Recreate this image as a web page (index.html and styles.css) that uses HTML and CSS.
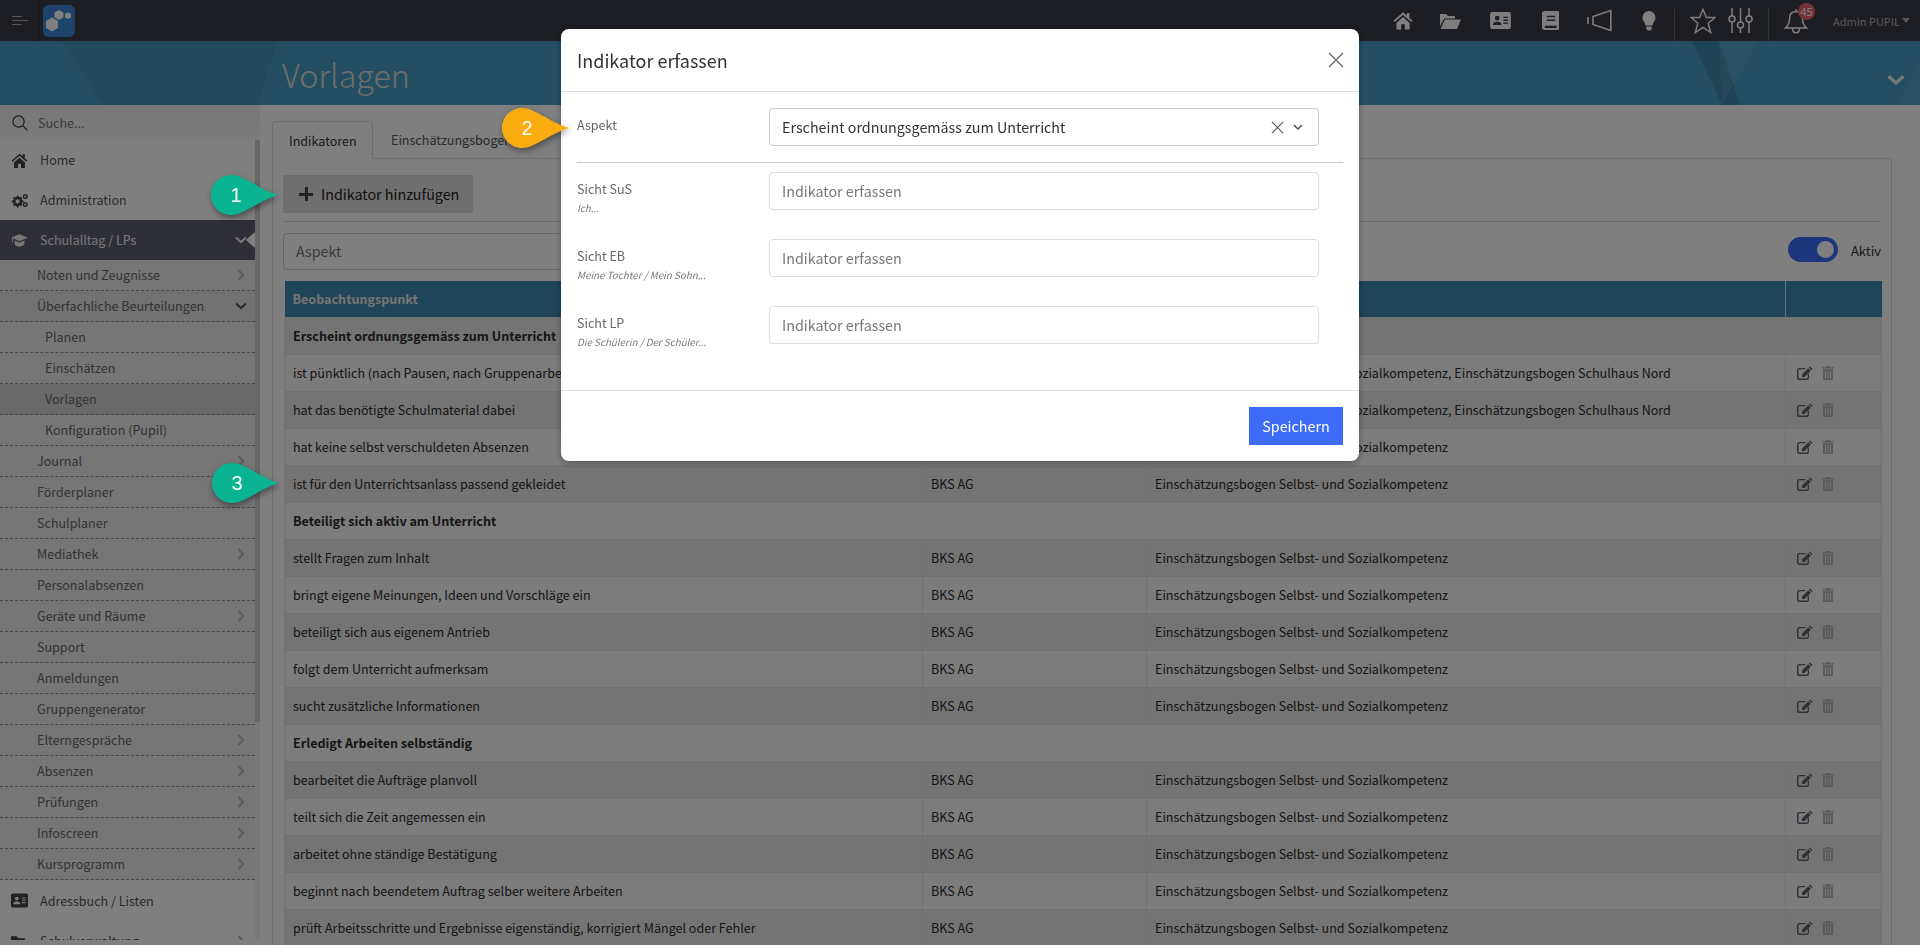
FILE: index.html
```html
<!DOCTYPE html>
<html lang="de">
<head>
  <meta charset="UTF-8">
  <title>Vorlagen</title>
  <link rel="stylesheet" href="styles.css">
</head>
<body>

  <!-- Icons -->
  <svg class="sprite" aria-hidden="true">
    <symbol id="i-home" viewBox="0 0 20 18"><path d="M10 .8.4 9.2l1.3 1.4L10 3.4l8.3 7.2 1.3-1.4-3.2-2.8V1.600h-2.600v2.400zM3.400 11.400 10 5.600l6.600 5.800V18h-4.800v-5.200H8.200V18H3.400z"/></symbol>
    <symbol id="i-folder" viewBox="0 0 22 18"><path d="M1 2h6l2 2h7v2.400H5.200L1 14zM5.800 7.600H22L18 17H1.600z"/></symbol>
    <symbol id="i-card" viewBox="0 0 22 18"><path fill-rule="evenodd" d="M2 0h18a2 2 0 0 1 2 2v14a2 2 0 0 1-2 2H2a2 2 0 0 1-2-2V2a2 2 0 0 1 2-2zm5.500 4a2.500 2.500 0 1 0 0 5 2.500 2.500 0 0 0 0-5zM3 13.800h9c0-2.400-1.500-3.600-4.500-3.600S3 11.400 3 13.800zM14 5v1.400h5V5zm0 3v1.400h5V8zm0 3v1.400h5V11z"/></symbol>
    <symbol id="i-book" viewBox="0 0 18 20"><path fill-rule="evenodd" d="M3 0h14a1 1 0 0 1 1 1v18a1 1 0 0 1-1 1H3a3 3 0 0 1-3-3V3a3 3 0 0 1 3-3zm2 5v1.500h9V5zm0 4v1.500h9V9zM3 15.500V18h12.500v-2.500z"/></symbol>
    <symbol id="i-horn" viewBox="0 0 25 23"><path fill="none" stroke="currentColor" stroke-width="1.600" d="M6 7.500 23.800 1.500v20L6 15.500zM1 8v7"/></symbol>
    <symbol id="i-bulb" viewBox="0 0 14 20"><path d="M7 0a6.500 6.500 0 0 0-6.500 6.500c0 3.200 2.500 4.700 3 8h7c.5-3.300 3-4.800 3-8A6.500 6.500 0 0 0 7 0z"/><path d="M4.200 15.500h5.600v2.600l-1.300 1.400h-3l-1.300-1.400z"/></symbol>
    <symbol id="i-star" viewBox="0 0 26 26"><path fill="none" stroke="currentColor" stroke-width="1.400" d="m13 1.500 3.400 8h8.600l-6.800 5.700 2.500 9.300-7.700-5.200-7.700 5.200 2.500-9.300L1 9.500h8.600z"/></symbol>
    <symbol id="i-sliders" viewBox="0 0 25 27"><g fill="none" stroke="currentColor" stroke-width="1.500"><path d="M4 1v8M4 15v11M12.500 1v14M12.500 21v5M21 1v8M21 15v11"/><circle cx="4" cy="12" r="3"/><circle cx="12.500" cy="18" r="3"/><circle cx="21" cy="12" r="3"/></g></symbol>
    <symbol id="i-bell" viewBox="0 0 24 26"><path fill="none" stroke="currentColor" stroke-width="1.500" d="M12 3.500c-4.500 0-6.500 3.400-6.500 7.500 0 5-1.800 7-4 9h21c-2.200-2-4-4-4-9 0-4.100-2-7.500-6.500-7.500zM12 1v2.500M8.500 20c0 3 1.500 4.800 3.500 4.800s3.500-1.800 3.500-4.800"/></symbol>
    <symbol id="i-search" viewBox="0 0 17 17"><path fill="none" stroke="currentColor" stroke-width="1.300" d="M7 1a6 6 0 1 0 0 12A6 6 0 0 0 7 1zm4.300 10.300 5 5"/></symbol>
    <symbol id="i-cogs" viewBox="0 0 17 14"><path d="M6 2.200 7.400 2l.5 1.500 1 .5 1.400-.7 1 1-.7 1.400.5 1 1.500.5v1.500l-1.500.5-.5 1 .7 1.400-1 1-1.400-.7-1 .5-.5 1.500H5.900l-.5-1.500-1-.5-1.400.7-1-1 .7-1.400-.5-1L.7 8.700V7.200l1.500-.5.5-1L2 4.300l1-1 1.400.7 1-.5zM6.600 5.800a2.100 2.100 0 1 0 0 4.200 2.100 2.100 0 0 0 0-4.200z"/><circle cx="14.300" cy="3" r="1.800" fill="none" stroke="currentColor" stroke-width="1.400"/><circle cx="14.300" cy="11" r="1.800" fill="none" stroke="currentColor" stroke-width="1.400"/></symbol>
    <symbol id="i-cap" viewBox="0 0 18 13"><path d="M9 0 18 3.500 9 7 2 4.300v4.200L1 8.500V3.900L0 3.500zM3.800 6.400 9 8.500l5.200-2.100V10c0 1.600-2.500 3-5.200 3s-5.200-1.400-5.200-3z"/></symbol>
    <symbol id="i-open" viewBox="0 0 16 12"><path d="M0 1h5l2 2h6v2H3.500L0 10zM4 6h12l-3 6H0z"/></symbol>
    <symbol id="i-right" viewBox="0 0 8 12"><path fill="none" stroke="currentColor" stroke-width="2.200" d="m1.500 1 4.500 5-4.500 5"/></symbol>
    <symbol id="i-down" viewBox="0 0 12 8"><path fill="none" stroke="currentColor" stroke-width="2.200" d="m1 1.500 5 4.500 5-4.500"/></symbol>
    <symbol id="i-edit" viewBox="0 0 16 14"><path d="M2.500 2H9L7.700 3.300H2.500a1 1 0 0 0-1 1v7.200a1 1 0 0 0 1 1h7.200a1 1 0 0 0 1-1V8.300L12 7v4.500A2.500 2.500 0 0 1 9.500 14h-7A2.500 2.500 0 0 1 0 11.500v-7A2.500 2.500 0 0 1 2.500 2zM13 .4l2.600 2.500-1.100 1.100L12 1.500zM11.300 2.200l2.500 2.500-6.300 6.200H5V8.400z"/></symbol>
    <symbol id="i-trash" viewBox="0 0 12 14"><path d="M4 0h4l.6 1.200H12v1.200H0V1.200h3.400zM1 3.300h10V13a1 1 0 0 1-1 1H2a1 1 0 0 1-1-1zm2 1.500v7.700h1V4.800zm2.500 0v7.700h1V4.800zm2.500 0v7.700h1V4.800z"/></symbol>
    <symbol id="i-drop" viewBox="0 0 68 40"><path d="M20 0C33 0 47 14 67 20 47 26 33 40 20 40 9 40 0 31 0 20S9 0 20 0z"/></symbol>
  </svg>

  <!-- Kopfzeile -->
  <header class="topbar">
    <div class="menu-btn"><span class="short"></span><span></span><span class="short"></span></div>
    <svg class="logo" viewBox="0 0 32 32">
      <rect width="32" height="32" rx="6" fill="#3d88d6"/>
      <path fill="#fff" d="m9 12.600 6 3.400v7l-6 3.400-6-3.400v-7zM16 5l4.500 2.500v5L16 15l-4.500-2.500v-5zM25 7.300l3 1.700v3.400l-3 1.700-3-1.700V9z"/>
    </svg>
    <nav class="top-icons">
      <svg class="ti ti-home"><use href="#i-home"/></svg>
      <svg class="ti ti-folder"><use href="#i-folder"/></svg>
      <svg class="ti ti-card"><use href="#i-card"/></svg>
      <svg class="ti ti-book"><use href="#i-book"/></svg>
      <svg class="ti ti-horn"><use href="#i-horn"/></svg>
      <svg class="ti ti-bulb"><use href="#i-bulb"/></svg>
      <span class="top-sep"></span>
      <svg class="ti ti-star"><use href="#i-star"/></svg>
      <svg class="ti ti-sliders"><use href="#i-sliders"/></svg>
      <span class="top-sep sep-2"></span>
      <div class="bell">
        <svg class="ti ti-bell"><use href="#i-bell"/></svg>
        <span class="badge">45</span>
      </div>
      <div class="user">Admin PUPIL<span class="caret"></span></div>
    </nav>
  </header>

  <!-- Titelband -->
  <div class="banner">
    <svg class="banner-bg" viewBox="0 0 1920 64" preserveAspectRatio="none">
      <path fill="#000" fill-opacity=".05" d="M62 0H278L257 64H103z"/>
      <path fill="#000" fill-opacity=".12" d="M1692 0H1719L1740 64H1722z"/>
      <path fill="#fff" fill-opacity=".07" d="M1719 0H1759L1722 64z"/>
      <path fill="#fff" fill-opacity=".05" d="M1920 20V64H1896z"/>
    </svg>
    <h1>Vorlagen</h1>
    <svg class="banner-chev"><use href="#i-down"/></svg>
  </div>

  <div class="layout">
    <!-- Seitenmenu -->
    <aside class="sidebar">
      <div class="search">
        <svg class="search-ic"><use href="#i-search"/></svg>
        <span>Suche...</span>
      </div>
      <div class="side-body">
        <ul class="side-list">
          <li class="top-item"><svg class="side-ic"><use href="#i-home"/></svg>Home</li>
          <li class="top-item"><svg class="side-ic"><use href="#i-cogs"/></svg>Administration</li>
          <li class="top-item current"><svg class="side-ic"><use href="#i-cap"/></svg>Schulalltag / LPs<svg class="chev-down light"><use href="#i-down"/></svg></li>
          <li class="sub">Noten und Zeugnisse<svg class="chev"><use href="#i-right"/></svg></li>
          <li class="sub open">Überfachliche Beurteilungen<svg class="chev-down"><use href="#i-down"/></svg></li>
          <li class="sub third">Planen</li>
          <li class="sub third">Einschätzen</li>
          <li class="sub third active">Vorlagen</li>
          <li class="sub third">Konfiguration (Pupil)</li>
          <li class="sub">Journal<svg class="chev"><use href="#i-right"/></svg></li>
          <li class="sub">Förderplaner</li>
          <li class="sub">Schulplaner</li>
          <li class="sub">Mediathek<svg class="chev"><use href="#i-right"/></svg></li>
          <li class="sub">Personalabsenzen</li>
          <li class="sub">Geräte und Räume<svg class="chev"><use href="#i-right"/></svg></li>
          <li class="sub">Support</li>
          <li class="sub">Anmeldungen</li>
          <li class="sub">Gruppengenerator</li>
          <li class="sub">Elterngespräche<svg class="chev"><use href="#i-right"/></svg></li>
          <li class="sub">Absenzen<svg class="chev"><use href="#i-right"/></svg></li>
          <li class="sub">Prüfungen<svg class="chev"><use href="#i-right"/></svg></li>
          <li class="sub">Infoscreen<svg class="chev"><use href="#i-right"/></svg></li>
          <li class="sub">Kursprogramm<svg class="chev"><use href="#i-right"/></svg></li>
          <li class="top-item"><svg class="side-ic"><use href="#i-card"/></svg>Adressbuch / Listen</li>
          <li class="top-item"><svg class="side-ic"><use href="#i-open"/></svg>Schulverwaltung<svg class="chev"><use href="#i-right"/></svg></li>
        </ul>
        <div class="side-scroll"><div class="side-thumb"></div></div>
      </div>
    </aside>

    <!-- Inhalt -->
    <main class="content">
      <div class="tabs">
        <div class="tab tab-active">Indikatoren</div>
        <div class="tab">Einschätzungsbogen</div>
      </div>
      <div class="panel">
        <button class="add-btn"><span class="plus"></span>Indikator hinzufügen</button>
        <hr class="line">
        <div class="filters">
          <div class="filter-input">Aspekt</div>
          <div class="aktiv">
            <span class="switch"><span class="knob"></span></span>
            <span class="aktiv-text">Aktiv</span>
          </div>
        </div>
        <table class="grid">
          <colgroup>
            <col class="c1"><col class="c2"><col class="c3"><col class="c4">
          </colgroup>
          <thead>
            <tr><th>Beobachtungspunkt</th><th></th><th></th><th></th></tr>
          </thead>
          <tbody>
            <tr class="group"><td colspan="4">Erscheint ordnungsgemäss zum Unterricht</td></tr>
            <tr><td>ist pünktlich (nach Pausen, nach Gruppenarbeiten)</td><td>BKS AG</td><td>Einschätzungsbogen Selbst- und Sozialkompetenz, Einschätzungsbogen Schulhaus Nord</td><td class="acts"><svg class="edit"><use href="#i-edit"/></svg><svg class="trash"><use href="#i-trash"/></svg></td></tr>
            <tr><td>hat das benötigte Schulmaterial dabei</td><td>BKS AG</td><td>Einschätzungsbogen Selbst- und Sozialkompetenz, Einschätzungsbogen Schulhaus Nord</td><td class="acts"><svg class="edit"><use href="#i-edit"/></svg><svg class="trash"><use href="#i-trash"/></svg></td></tr>
            <tr><td>hat keine selbst verschuldeten Absenzen</td><td>BKS AG</td><td>Einschätzungsbogen Selbst- und Sozialkompetenz</td><td class="acts"><svg class="edit"><use href="#i-edit"/></svg><svg class="trash"><use href="#i-trash"/></svg></td></tr>
            <tr><td>ist für den Unterrichtsanlass passend gekleidet</td><td>BKS AG</td><td>Einschätzungsbogen Selbst- und Sozialkompetenz</td><td class="acts"><svg class="edit"><use href="#i-edit"/></svg><svg class="trash"><use href="#i-trash"/></svg></td></tr>
            <tr class="group"><td colspan="4">Beteiligt sich aktiv am Unterricht</td></tr>
            <tr><td>stellt Fragen zum Inhalt</td><td>BKS AG</td><td>Einschätzungsbogen Selbst- und Sozialkompetenz</td><td class="acts"><svg class="edit"><use href="#i-edit"/></svg><svg class="trash"><use href="#i-trash"/></svg></td></tr>
            <tr><td>bringt eigene Meinungen, Ideen und Vorschläge ein</td><td>BKS AG</td><td>Einschätzungsbogen Selbst- und Sozialkompetenz</td><td class="acts"><svg class="edit"><use href="#i-edit"/></svg><svg class="trash"><use href="#i-trash"/></svg></td></tr>
            <tr><td>beteiligt sich aus eigenem Antrieb</td><td>BKS AG</td><td>Einschätzungsbogen Selbst- und Sozialkompetenz</td><td class="acts"><svg class="edit"><use href="#i-edit"/></svg><svg class="trash"><use href="#i-trash"/></svg></td></tr>
            <tr><td>folgt dem Unterricht aufmerksam</td><td>BKS AG</td><td>Einschätzungsbogen Selbst- und Sozialkompetenz</td><td class="acts"><svg class="edit"><use href="#i-edit"/></svg><svg class="trash"><use href="#i-trash"/></svg></td></tr>
            <tr><td>sucht zusätzliche Informationen</td><td>BKS AG</td><td>Einschätzungsbogen Selbst- und Sozialkompetenz</td><td class="acts"><svg class="edit"><use href="#i-edit"/></svg><svg class="trash"><use href="#i-trash"/></svg></td></tr>
            <tr class="group"><td colspan="4">Erledigt Arbeiten selbständig</td></tr>
            <tr><td>bearbeitet die Aufträge planvoll</td><td>BKS AG</td><td>Einschätzungsbogen Selbst- und Sozialkompetenz</td><td class="acts"><svg class="edit"><use href="#i-edit"/></svg><svg class="trash"><use href="#i-trash"/></svg></td></tr>
            <tr><td>teilt sich die Zeit angemessen ein</td><td>BKS AG</td><td>Einschätzungsbogen Selbst- und Sozialkompetenz</td><td class="acts"><svg class="edit"><use href="#i-edit"/></svg><svg class="trash"><use href="#i-trash"/></svg></td></tr>
            <tr><td>arbeitet ohne ständige Bestätigung</td><td>BKS AG</td><td>Einschätzungsbogen Selbst- und Sozialkompetenz</td><td class="acts"><svg class="edit"><use href="#i-edit"/></svg><svg class="trash"><use href="#i-trash"/></svg></td></tr>
            <tr><td>beginnt nach beendetem Auftrag selber weitere Arbeiten</td><td>BKS AG</td><td>Einschätzungsbogen Selbst- und Sozialkompetenz</td><td class="acts"><svg class="edit"><use href="#i-edit"/></svg><svg class="trash"><use href="#i-trash"/></svg></td></tr>
            <tr><td>prüft Arbeitsschritte und Ergebnisse eigenständig, korrigiert Mängel oder Fehler</td><td>BKS AG</td><td>Einschätzungsbogen Selbst- und Sozialkompetenz</td><td class="acts"><svg class="edit"><use href="#i-edit"/></svg><svg class="trash"><use href="#i-trash"/></svg></td></tr>
          </tbody>
        </table>
      </div>
    </main>
  </div>

  <div class="backdrop"></div>

  <!-- Dialog -->
  <div class="modal-wrap">
    <div class="modal">
      <div class="modal-head">
        <h2>Indikator erfassen</h2>
        <svg class="modal-x" viewBox="0 0 16 16"><path d="m1 1 14 14M15 1 1 15"/></svg>
      </div>
      <div class="modal-body">
        <div class="form-row first">
          <div class="form-label">Aspekt</div>
          <div class="field select">
            <span>Erscheint ordnungsgemäss zum Unterricht</span>
            <svg class="sel-x" viewBox="0 0 14 14"><path d="m1 1 12 12M13 1 1 13"/></svg>
            <svg class="sel-down" viewBox="0 0 10 7"><path d="m1 1 4 4 4-4"/></svg>
          </div>
        </div>
        <hr class="form-line">
        <div class="form-row">
          <div class="form-label">Sicht SuS<small>Ich...</small></div>
          <div class="field">Indikator erfassen</div>
        </div>
        <div class="form-row">
          <div class="form-label">Sicht EB<small>Meine Tochter / Mein Sohn...</small></div>
          <div class="field">Indikator erfassen</div>
        </div>
        <div class="form-row">
          <div class="form-label">Sicht LP<small>Die Schülerin / Der Schüler...</small></div>
          <div class="field">Indikator erfassen</div>
        </div>
      </div>
      <div class="modal-foot">
        <button class="save-btn">Speichern</button>
      </div>
    </div>
  </div>

  <!-- Markierungen -->
  <div class="mark mark-1 green"><svg><use href="#i-drop"/></svg><span>1</span></div>
  <div class="mark mark-2 orange"><svg><use href="#i-drop"/></svg><span>2</span></div>
  <div class="mark mark-3 green"><svg><use href="#i-drop"/></svg><span>3</span></div>

</body>
</html>
```

FILE: styles.css
```css
* {
  box-sizing: border-box;
  margin: 0;
  padding: 0;
}

html,
body {
  height: 945px;
  overflow: hidden;
}

body {
  font-family: "Noto Sans CJK SC", "Noto Sans", sans-serif;
  font-size: 12.55px;
  line-height: 20px;
  color: #333;
  background: #fff;
}

.sprite {
  display: none;
}

svg {
  fill: currentColor;
}

/* Kopfzeile */
.topbar {
  height: 41px;
  background: #3a3c46;
  display: flex;
  align-items: center;
  position: relative;
}

.menu-btn {
  width: 39px;
  height: 41px;
  border-right: 1px solid #26272d;
  padding: 16px 0 0 12px;
  display: flex;
  flex-direction: column;
  gap: 3px;
}

.menu-btn span {
  display: block;
  width: 16px;
  height: 1px;
  background: #aaa;
}

.menu-btn .short {
  width: 10px;
}

.logo {
  width: 32px;
  height: 32px;
  margin-left: 4px;
}

.top-icons {
  margin-left: auto;
  display: flex;
  align-items: center;
  height: 41px;
  color: #fff;
}

.ti {
  display: block;
}

.ti-home {
  width: 20px;
  height: 19px;
}

.ti-folder {
  width: 22px;
  height: 18px;
  margin-left: 26px;
}

.ti-card {
  width: 21px;
  height: 17px;
  margin-left: 29px;
}

.ti-book {
  width: 17px;
  height: 19px;
  margin-left: 31px;
}

.ti-horn {
  width: 25px;
  height: 23px;
  margin-left: 28px;
}

.ti-bulb {
  width: 14px;
  height: 20px;
  margin-left: 30px;
}

.top-sep {
  width: 1px;
  height: 32px;
  margin: 9px 0 0 18px;
  background: #6c6c70;
}

.ti-star {
  width: 26px;
  height: 26px;
  margin-left: 15px;
}

.ti-sliders {
  width: 25px;
  height: 27px;
  margin-left: 12px;
}

.sep-2 {
  margin-left: 15px;
}

.bell {
  position: relative;
  margin-left: 15px;
}

.ti-bell {
  width: 24px;
  height: 26px;
}

.badge {
  position: absolute;
  left: 14px;
  top: -5px;
  width: 17px;
  height: 17px;
  border-radius: 50%;
  background: #f0616f;
  color: #fff;
  font-size: 11px;
  line-height: 17px;
  text-align: center;
}

.user {
  margin: 0 10px 0 25px;
  font-size: 11px;
  color: #b4b4b4;
  display: flex;
  align-items: center;
}

.caret {
  margin-left: 2px;
  border-top: 5px solid #b4b4b4;
  border-left: 4px solid transparent;
  border-right: 4px solid transparent;
}

/* Titelband */
.banner {
  height: 64px;
  background: #489dc5;
  position: relative;
  padding-left: 282px;
}

.banner-bg {
  position: absolute;
  inset: 0;
  width: 100%;
  height: 100%;
}

.banner h1 {
  position: relative;
  font-size: 32.300px;
  font-weight: 300;
  line-height: 66px;
  color: #dcdcdc;
}

.banner-chev {
  position: absolute;
  right: 15px;
  top: 33px;
  width: 18px;
  height: 12px;
  color: #eee;
}

.layout {
  display: flex;
  height: 840px;
}

/* Seitenmenu */
.sidebar {
  width: 260px;
  flex: none;
  color: #666;
}

.search {
  height: 35px;
  background: linear-gradient(#f0f0f0, #f8f8f8);
  display: flex;
  align-items: center;
  padding-left: 12px;
  gap: 10px;
  color: #333;
}

.search span {
  color: #777;
}

.search-ic {
  width: 16px;
  height: 16px;
}

.side-body {
  display: flex;
  height: 800px;
}

.side-list {
  width: 255px;
  list-style: none;
  overflow: hidden;
}

.side-list li {
  position: relative;
  display: flex;
  align-items: center;
}

.top-item {
  height: 40px;
  padding-left: 11px;
  color: #555;
}

.top-item:nth-last-child(2) {
  height: 41px;
}

.side-ic {
  width: 17px;
  height: 15px;
  margin-right: 12px;
  color: #444;
}

.current {
  background: #5f616e;
  color: #eee;
}

.current .side-ic {
  color: #eee;
}

/* kleiner Pfeil am Rand */
.current::after {
  content: "";
  position: absolute;
  right: 0;
  top: 12px;
  border-top: 8px solid transparent;
  border-bottom: 8px solid transparent;
  border-right: 9px solid #fff;
}

.sub {
  height: 31px;
  padding-left: 37px;
  background: #ededed;
  border-bottom: 1px dashed #8a8a8a;
}

.open {
  background: #e4e4e4;
}

.third {
  padding-left: 45px;
}

.active {
  background: #d2d2d2;
}

.chev {
  position: absolute;
  left: 237px;
  top: 9px;
  width: 8px;
  height: 12px;
  color: #bbb;
}

.chev-down {
  position: absolute;
  left: 235px;
  top: 11px;
  width: 12px;
  height: 8px;
  color: #555;
}

.chev-down.light {
  top: 16px;
  color: #eee;
}

.top-item .chev {
  top: 14px;
}

.side-scroll {
  width: 5px;
  background: #f2f2f2;
}

.side-thumb {
  height: 582px;
  background: #cfcfcf;
}

/* Inhalt */
.content {
  flex: 1;
  padding: 16px 28px 0 12px;
  min-width: 0;
}

.tabs {
  display: flex;
  height: 38px;
}

.tab {
  padding: 9px 18px 0;
  color: #555;
}

.tab-active {
  width: 101px;
  padding: 9px 16px 0;
  color: #333;
  background: #fff;
  border: 1px solid #ddd;
  border-bottom: 0;
  border-radius: 4px 4px 0 0;
  position: relative;
}

.panel {
  margin-top: -1px;
  height: 800px;
  padding: 16px 10px 0;
  border: 1px solid #ddd;
}

.add-btn {
  display: flex;
  align-items: center;
  width: 190px;
  height: 38px;
  padding-left: 16px;
  background: #dedede;
  border: 0;
  font: inherit;
  font-size: 14.300px;
  white-space: nowrap;
  color: #222;
}

.plus {
  position: relative;
  width: 14px;
  height: 14px;
  margin-right: 8px;
}

.plus::before,
.plus::after {
  content: "";
  position: absolute;
  background: #444;
}

.plus::before {
  left: 0;
  right: 0;
  top: 6px;
  height: 2.500px;
}

.plus::after {
  top: 0;
  bottom: 0;
  left: 6px;
  width: 2.500px;
}

.line {
  border: 0;
  border-top: 1px solid #d6d6d6;
  margin: 8px 0 10px;
}

.filters {
  display: flex;
  justify-content: space-between;
  align-items: center;
  height: 38px;
  margin-bottom: 11px;
}

.filter-input {
  width: 560px;
  height: 37px;
  border: 1px solid #ccc;
  border-radius: 4px;
  padding: 7px 12px;
  font-size: 14.300px;
  color: #777;
}

.aktiv {
  display: flex;
  align-items: center;
  gap: 13px;
}

.aktiv-text {
  font-size: 13px;
}

.switch {
  position: relative;
  width: 50px;
  height: 25px;
  margin-top: -3px;
  border-radius: 13px;
  background: #3d6cf8;
}

.knob {
  position: absolute;
  right: 4px;
  top: 4px;
  width: 17px;
  height: 17px;
  border-radius: 50%;
  background: #fff;
}

.grid {
  width: 1597px;
  margin-left: 1px;
  border-collapse: collapse;
  table-layout: fixed;
}

.c1 {
  width: 638px;
}

.c2 {
  width: 224px;
}

.c3 {
  width: 639px;
}

.c4 {
  width: 96px;
}

.grid th {
  height: 36px;
  padding: 0 8px;
  background: #3e8bb3;
  color: #ececec;
  text-align: left;
  border-right: 1px solid #cfdde5;
}

.grid th:last-child {
  border-right: 0;
}

.grid td {
  height: 37px;
  padding: 0 8px;
  border: 1px solid #e2e2e2;
  color: #2c2c2c;
  white-space: nowrap;
  overflow: hidden;
}

.grid tbody tr:nth-child(odd) {
  background: #e8e8e8;
}

.grid tbody tr:nth-child(even) {
  background: #f8f8f8;
}

.group td {
  font-weight: 700;
}

.grid .acts {
  padding-left: 11px;
  font-size: 0;
}

.edit {
  width: 16px;
  height: 14px;
  color: #60606c;
  vertical-align: middle;
}

.trash {
  width: 12px;
  height: 14px;
  margin-left: 9px;
  color: #b4b4b4;
  vertical-align: middle;
}

/* Dialog */
.backdrop {
  position: fixed;
  inset: 0;
  background: rgba(0, 0, 0, 0.5);
}

.modal-wrap {
  position: fixed;
  inset: 0;
  display: flex;
  justify-content: center;
  padding-top: 29px;
  align-items: flex-start;
}

.modal {
  width: 798px;
  height: 432px;
  background: #fff;
  border-radius: 8px;
  box-shadow: 0 2px 6px rgba(0, 0, 0, 0.3);
  overflow: hidden;
}

.modal-head {
  height: 63px;
  padding: 0 15px 0 16px;
  border-bottom: 1px solid #dee2e6;
  display: flex;
  justify-content: space-between;
  align-items: center;
}

.modal-head h2 {
  font-size: 18px;
  font-weight: 400;
  color: #333;
}

.modal-x {
  width: 16px;
  height: 16px;
  fill: none;
  stroke: #666;
  stroke-width: 1.300;
}

.modal-body {
  height: 298px;
  padding: 16px 16px 0;
}

.form-row {
  display: flex;
  height: 67px;
}

.form-row.first {
  height: 38px;
}

.form-label {
  width: 192px;
  padding-top: 8px;
  line-height: 18px;
  color: #666;
}

.form-label small {
  display: block;
  margin-top: 1px;
  font-size: 9.800px;
  font-style: italic;
  color: #777;
}

.field {
  width: 550px;
  height: 38px;
  padding: 8px 12px;
  border: 1px solid #ddd;
  border-radius: 4px;
  font-size: 14.300px;
  color: #777;
}

.select {
  display: flex;
  align-items: center;
  padding-top: 0;
  padding-bottom: 0;
  border-color: #ccc;
  color: #333;
}

.sel-x {
  width: 13px;
  height: 13px;
  margin-left: auto;
  fill: none;
  stroke: #555;
  stroke-width: 1.200;
}

.sel-down {
  width: 10px;
  height: 7px;
  margin-left: 9px;
  margin-right: 3px;
  fill: none;
  stroke: #444;
  stroke-width: 1.400;
}

.form-line {
  border: 0;
  border-top: 1px solid #ccc;
  margin: 16px 0 9px;
}

.modal-foot {
  height: 71px;
  padding: 16px;
  border-top: 1px solid #dee2e6;
  display: flex;
  justify-content: flex-end;
}

.save-btn {
  width: 94px;
  height: 38px;
  background: #3d6cf8;
  border: 0;
  color: #fff;
  font: inherit;
  font-size: 14.300px;
}

/* Markierungen */
.mark {
  position: absolute;
  width: 68px;
  height: 40px;
  filter: drop-shadow(1px 3px 3px rgba(0, 0, 0, 0.4));
}

.mark svg {
  width: 68px;
  height: 40px;
  display: block;
}

.mark span {
  position: absolute;
  left: 0;
  top: 0;
  width: 50px;
  color: #fff;
  font-family: "Liberation Sans", sans-serif;
  font-size: 20px;
  line-height: 40px;
  text-align: center;
}

.green {
  color: #0ab391;
}

.orange {
  color: #f9ab0f;
}

.mark-1 {
  left: 211px;
  top: 175px;
}

.mark-2 {
  left: 502px;
  top: 108px;
}

.mark-3 {
  left: 212px;
  top: 463px;
}
```
